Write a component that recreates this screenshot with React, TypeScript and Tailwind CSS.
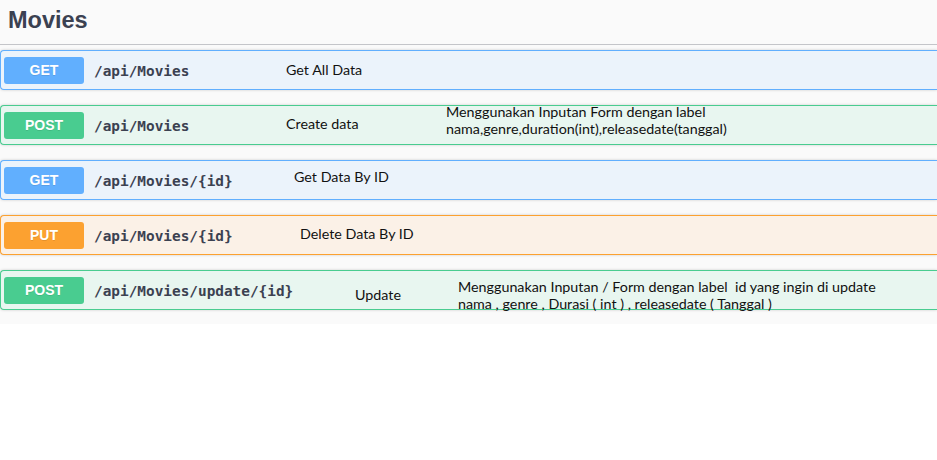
import React from "react";

type Method = "GET" | "POST" | "PUT";

const styles: Record<Method, { row: string; btn: string }> = {
  GET: { row: "border-[#61affe] bg-[#ebf3fb]", btn: "bg-[#61affe]" },
  POST: { row: "border-[#49cc90] bg-[#e8f6f0]", btn: "bg-[#49cc90]" },
  PUT: { row: "border-[#fca130] bg-[#fbf1e7]", btn: "bg-[#fca130]" },
};

const note =
  "text-[#111] text-[14.3px] leading-[17px] whitespace-pre font-['Lato','Noto_Sans',sans-serif]";

function Row({
  method,
  path,
  pathW,
  children,
}: {
  method: Method;
  path: string;
  pathW: string;
  children?: React.ReactNode;
}) {
  const s = styles[method];
  return (
    <div
      className={`flex h-10 items-center rounded-l-[4px] border border-r-0 pl-[3px] shadow-[0_0_3px_rgba(0,0,0,0.19)] ${s.row}`}
    >
      <div
        className={`flex h-[27px] w-[80px] shrink-0 items-center justify-center rounded-[3px] font-['Liberation_Sans',Arial,sans-serif] text-[14px] font-bold text-white [text-shadow:0_1px_0_rgba(0,0,0,0.1)] ${s.btn}`}
      >
        {method}
      </div>
      <div
        className={`ml-[10px] mt-[3px] shrink-0 font-['DejaVu_Sans_Mono',monospace] text-[14.4px] font-bold text-[#3b4151] ${pathW}`}
      >
        {path}
      </div>
      {children}
    </div>
  );
}

export default function App() {
  return (
    <div className="h-[460px] w-[937px] overflow-hidden bg-white">
      <div className="bg-[#fafafa] pb-[14px]">
        <div className="h-[45px] border-b border-[#c4c5c9] pl-[8px] pt-[6px]">
          <h4 className="font-['Liberation_Sans',Arial,sans-serif] text-[23.5px] font-bold leading-[28px] text-[#3b4151]">
            Movies
          </h4>
        </div>
        <div className="flex flex-col gap-[15px] pt-[5px]">
          <Row method="GET" path="/api/Movies" pathW="w-[192px]">
            <div className={`${note} mb-[2px]`}>Get All Data</div>
          </Row>
          <Row method="POST" path="/api/Movies" pathW="w-[192px]">
            <div className={`${note} mb-[3px] w-[160px] shrink-0`}>Create data</div>
            <div className={`${note} mb-[10px]`}>
              {"Menggunakan Inputan Form dengan label\nnama,genre,duration(int),releasedate(tanggal)"}
            </div>
          </Row>
          <Row method="GET" path="/api/Movies/{id}" pathW="w-[200px]">
            <div className={`${note} mb-[8px]`}>Get Data By ID</div>
          </Row>
          <Row method="PUT" path="/api/Movies/{id}" pathW="w-[206px]">
            <div className={`${note} mb-[3px]`}>Delete Data By ID</div>
          </Row>
          <Row method="POST" path="/api/Movies/update/{id}" pathW="w-[261px]">
            <div className={`${note} mt-[8px] w-[103px] shrink-0`}>Update</div>
            <div className={`${note} mt-[10px]`}>
              {"Menggunakan Inputan / Form dengan label  id yang ingin di update\nnama , genre , Durasi ( int ) , releasedate ( Tanggal )"}
            </div>
          </Row>
        </div>
      </div>
    </div>
  );
}
